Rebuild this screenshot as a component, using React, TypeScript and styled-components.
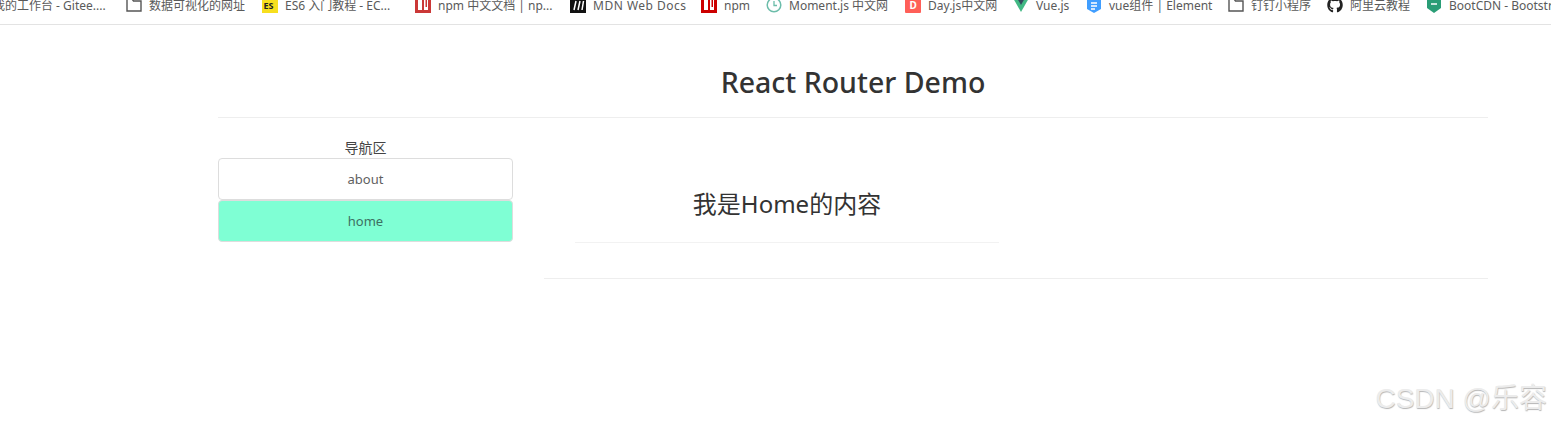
import { createGlobalStyle, styled } from "styled-components";
import { ReactNode } from "react";
import { FaGithub } from "react-icons/fa";

const GlobalStyle = createGlobalStyle`
  html, body {
    margin: 0;
    background: #fff;
    height: 427px;
    overflow: hidden;
  }
  body {
    font-family: "Noto Sans", "Noto Sans CJK SC", sans-serif;
    color: #333;
  }
`;

const Page = styled.div`
  position: relative;
  width: 1551px;
  height: 427px;
  overflow: hidden;
`;

const BookmarkBar = styled.div`
  display: flex;
  align-items: flex-end;
  height: 25px;
  padding-bottom: 12px;
  box-sizing: border-box;
  border-bottom: 1px solid #e3e3e3;
  overflow: hidden;
  white-space: nowrap;
`;

const Bookmark = styled.div<{ $width: number; $spacing?: number }>`
  flex: none;
  display: flex;
  align-items: center;
  gap: 7px;
  width: ${(p) => p.$width}px;
  height: 14px;
  font-size: 12px;
  letter-spacing: ${(p) => p.$spacing ?? 0}px;
  color: #5a5a5a;

  svg {
    flex: none;
  }
`;

const CutBookmark = styled(Bookmark)`
  margin-left: -7px;
`;

const Container = styled.div`
  width: 1270px;
  margin: 0 0 0 218px;
`;

const PageHeader = styled.div`
  height: 93px;
  box-sizing: border-box;
  padding-top: 38px;
  border-bottom: 1px solid #eee;
`;

const Title = styled.h2`
  margin: 0;
  font-size: 28.5px;
  line-height: 39px;
  font-weight: 500;
  text-align: center;
  color: #333;
`;

const Columns = styled.div`
  display: grid;
  grid-template-columns: 295px 944px;
  column-gap: 31px;
  padding-top: 21px;
`;

const Sidebar = styled.div`
  display: flex;
  flex-direction: column;
`;

const SidebarTitle = styled.div`
  height: 19px;
  line-height: 17px;
  font-size: 14px;
  text-align: center;
  color: #444;
`;

const NavItem = styled.a<{ $active?: boolean }>`
  display: block;
  height: 42px;
  line-height: 41px;
  box-sizing: border-box;
  border: 1px solid #ddd;
  border-radius: 4px;
  text-align: center;
  font-size: 13px;
  color: ${(p) => (p.$active ? "#3d6f62" : "#5f5f5f")};
  background: ${(p) => (p.$active ? "aquamarine" : "#fff")};
`;

const Content = styled.div`
  height: 140px;
  box-sizing: border-box;
  padding: 36px 0 0 31px;
  border-bottom: 1px solid #eee;
`;

const ContentHeader = styled.div`
  width: 424px;
  height: 68px;
  box-sizing: border-box;
  padding-top: 12px;
  border-bottom: 1px solid #f2f2f2;
`;

const ContentTitle = styled.h3`
  margin: 0;
  font-size: 24px;
  line-height: 34px;
  font-weight: 400;
  text-align: center;
  color: #333;
`;

const Watermark = styled.div`
  position: absolute;
  right: 4px;
  bottom: 11px;
  font-family: "Liberation Sans", "Noto Sans CJK SC", sans-serif;
  font-size: 28px;
  line-height: 34px;
  color: #ececec;
  text-shadow: 0.5px 0.5px 1px #b5b5b5;
`;

const Icon = ({ children }: { children: ReactNode }) => (
  <svg width="16" height="16" viewBox="0 0 16 16">
    {children}
  </svg>
);

const FolderIcon = () => (
  <Icon>
    <path d="M1 2v12h14V4H7.500L6 2z" fill="none" stroke="#555" strokeWidth="1.400" />
  </Icon>
);

const NpmIcon = ({ color }: { color: string }) => (
  <Icon>
    <rect width="16" height="16" fill={color} />
    <rect x="3" y="3" width="4" height="10" fill="#fff" />
    <rect x="9" y="3" width="4" height="10" fill="#fff" />
    <rect x="10.500" y="3" width="1.500" height="7" fill={color} />
  </Icon>
);

export default function App() {
  return (
    <Page>
      <GlobalStyle />
      <BookmarkBar>
        <CutBookmark $width={133}>我的工作台 - Gitee....</CutBookmark>
        <Bookmark $width={136}>
          <FolderIcon />
          数据可视化的网址
        </Bookmark>
        <Bookmark $width={153}>
          <Icon>
            <rect width="16" height="16" fill="#f7df1e" />
            <text x="1.500" y="12" fontSize="9" fontWeight="700" fill="#222">ES</text>
          </Icon>
          ES6 入门教程 - EC...
        </Bookmark>
        <Bookmark $width={155}>
          <NpmIcon color="#cb3837" />
          npm 中文文档 | np...
        </Bookmark>
        <Bookmark $width={131} $spacing={0.5}>
          <Icon>
            <rect width="16" height="16" fill="#111" />
            <path d="M4 13l2-9M8 13l2-9M12 13l1.500-9" stroke="#fff" strokeWidth="1.500" />
          </Icon>
          MDN Web Docs
        </Bookmark>
        <Bookmark $width={65}>
          <NpmIcon color="#c00" />
          npm
        </Bookmark>
        <Bookmark $width={139}>
          <Icon>
            <circle cx="8" cy="8" r="6.800" fill="none" stroke="#6cbdaa" strokeWidth="1.500" />
            <path d="M8 4v4.500h3" fill="none" stroke="#6cbdaa" strokeWidth="1.300" />
          </Icon>
          Moment.js 中文网
        </Bookmark>
        <Bookmark $width={108}>
          <Icon>
            <rect width="16" height="16" rx="1" fill="#ff5f58" />
            <text x="4.500" y="12" fontSize="10" fontWeight="700" fill="#fff">D</text>
          </Icon>
          Day.js中文网
        </Bookmark>
        <Bookmark $width={73}>
          <Icon>
            <path d="M0 1h16L8 15z" fill="#41b883" />
            <path d="M4 1h8L8 8z" fill="#35495e" />
          </Icon>
          Vue.js
        </Bookmark>
        <Bookmark $width={142}>
          <Icon>
            <path d="M1 3l7-3 7 3v9l-7 4-7-4z" fill="#409eff" />
            <path d="M5 6h6M5 9h6M5 12h4" stroke="#fff" strokeWidth="1.300" />
          </Icon>
          vue组件 | Element
        </Bookmark>
        <Bookmark $width={99}>
          <FolderIcon />
          钉钉小程序
        </Bookmark>
        <Bookmark $width={99}>
          <FaGithub size={16} color="#222" />
          阿里云教程
        </Bookmark>
        <Bookmark $width={140}>
          <Icon>
            <path d="M1 2l7-2 7 2v9l-7 5-7-5z" fill="#2a9d76" />
            <path d="M5 7h6" stroke="#fff" strokeWidth="1.500" />
          </Icon>
          BootCDN - Bootstrap
        </Bookmark>
      </BookmarkBar>
      <Container>
        <PageHeader>
          <Title>React Router Demo</Title>
        </PageHeader>
        <Columns>
          <Sidebar>
            <SidebarTitle>导航区</SidebarTitle>
            <NavItem>about</NavItem>
            <NavItem $active>home</NavItem>
          </Sidebar>
          <Content>
            <ContentHeader>
              <ContentTitle>我是Home的内容</ContentTitle>
            </ContentHeader>
          </Content>
        </Columns>
      </Container>
      <Watermark>CSDN @乐容</Watermark>
    </Page>
  );
}
